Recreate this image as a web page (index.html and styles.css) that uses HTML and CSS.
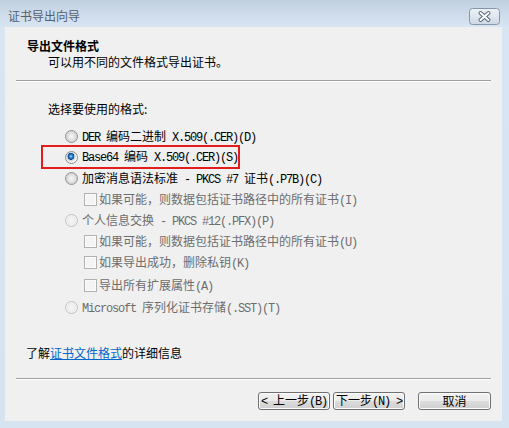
FILE: index.html
```html
<!DOCTYPE html>
<html lang="zh-CN">
<head>
  <meta charset="UTF-8" />
  <title>证书导出向导</title>
  <link rel="stylesheet" href="styles.css">
</head>
<body>
  <div class="window">
    <div class="titlebar">
      <span class="title">证书导出向导</span>
      <svg class="close" width="31" height="17" viewBox="0 0 31 17">
        <defs>
          <linearGradient id="closebg" x1="0" y1="0" x2="0" y2="1">
            <stop offset="0" stop-color="#eef2f7" />
            <stop offset="0.5" stop-color="#dfe6ef" />
            <stop offset="1" stop-color="#cdd7e3" />
          </linearGradient>
        </defs>
        <rect x="0.5" y="0.5" width="30" height="16" rx="3" fill="url(#closebg)" stroke="#8797ab" />
        <path d="M11.5 5 L19.5 12 M19.5 5 L11.5 12" stroke="#56667a" stroke-width="4" stroke-linecap="round" />
        <path d="M11.5 5 L19.5 12 M19.5 5 L11.5 12" stroke="#ffffff" stroke-width="2" stroke-linecap="round" />
      </svg>
    </div>

    <div class="client">
      <div class="header">
        <div class="head-title">导出文件格式</div>
        <div class="head-sub">可以用不同的文件格式导出证书。</div>
      </div>
      <div class="rule"></div>

      <div class="content">
        <div class="prompt">选择要使用的格式:</div>
        <div class="options">
          <div class="opt">
            <span class="radio"></span>
            <span><span class="en">DER </span>编码二进制<span class="en"> X.509(.CER)(D)</span></span>
          </div>
          <div class="opt marked">
            <span class="radio on"></span>
            <span><span class="en">Base64 </span>编码<span class="en"> X.509(.CER)(S)</span></span>
          </div>
          <div class="opt">
            <span class="radio"></span>
            <span>加密消息语法标准<span class="en"> - PKCS #7 </span>证书<span class="en">(.P7B)(C)</span></span>
          </div>
          <div class="opt sub dis">
            <span class="check"></span>
            <span>如果可能，则数据包括证书路径中的所有证书<span class="en">(I)</span></span>
          </div>
          <div class="opt dis">
            <span class="radio off"></span>
            <span>个人信息交换<span class="en"> - PKCS #12(.PFX)(P)</span></span>
          </div>
          <div class="opt sub dis">
            <span class="check"></span>
            <span>如果可能，则数据包括证书路径中的所有证书<span class="en">(U)</span></span>
          </div>
          <div class="opt sub dis">
            <span class="check"></span>
            <span>如果导出成功，删除私钥<span class="en">(K)</span></span>
          </div>
          <div class="opt sub dis gap2">
            <span class="check"></span>
            <span>导出所有扩展属性<span class="en">(A)</span></span>
          </div>
          <div class="opt dis gap1">
            <span class="radio off"></span>
            <span><span class="en">Microsoft </span>序列化证书存储<span class="en">(.SST)(T)</span></span>
          </div>
        </div>
        <div class="more">了解<a href="#">证书文件格式</a>的详细信息</div>
      </div>

      <div class="footer">
        <div class="rule"></div>
        <div class="buttons">
          <button type="button" class="btn"><span class="en">&lt; </span>上一步<span class="en">(B)</span></button>
          <button type="button" class="btn">下一步<span class="en">(N) &gt;</span></button>
          <button type="button" class="btn cancel">取消</button>
        </div>
      </div>
    </div>
  </div>
</body>
</html>
```

FILE: styles.css
```css
body { margin: 0; background: #d6e4f2; font-family: "Noto Sans CJK SC", sans-serif; font-size: 12px; line-height: 14px; color: #000; }
.window { width: 509px; height: 428px; display: flex; flex-direction: column; background: linear-gradient(#c1d0e0 0, #d8e5f3 27px, #d6e4f2 100%); }
.titlebar { height: 27px; display: flex; justify-content: space-between; align-items: flex-start; }
.title { margin: 9px 0 0 8px; color: #56606c; }
.close { display: block; margin: 8px 9px 0 0; }

.client { margin: 0 7px 7px 5px; height: 394px; background: #f0f0f0; display: flex; flex-direction: column; }
.header { padding: 12px 0 0 22px; }
.head-title { font-weight: bold; }
.head-sub { margin-top: 2px; padding-left: 21px; }
.rule { margin: 11px 11px 0; border-top: 1px solid #a0a0a0; border-bottom: 1px solid #ffffff; }

.content { flex: 1; padding: 20px 0 0 21px; }
.prompt { padding-left: 22px; }
.options { margin-top: 10px; padding-left: 39px; }
.opt { display: flex; align-items: center; gap: 4px; height: 21px; white-space: nowrap; }
.opt.sub { padding-left: 19px; gap: 2px; }
.opt.gap2 { margin-top: 2px; }
.opt.gap1 { margin-top: 1px; }
.opt.marked { box-sizing: border-box; width: 199px; height: 24px; margin: -2px 0 -1px -24px; padding-left: 22px; border: 2px solid #e31c1c; }
.dis { color: #6d6d6d; }
.en { font-family: "Liberation Mono", monospace; letter-spacing: -1.2px; }

.radio { flex: none; box-sizing: border-box; width: 13px; height: 13px; border-radius: 50%; border: 1px solid #8e8f8f; background: radial-gradient(circle at 50% 50%, #f7f7f7 0, #dcdcdc 4.5px, #c9c9c9 5px, #f8f8f8 5.5px); }
.radio.on { background: radial-gradient(circle at 45% 40%, #a8dcff 0, #2b82d4 1.6px, #0c4a8c 3.2px, #c5d0da 3.6px, #e2e2e2 4.6px, #f8f8f8 5.5px); }
.radio.off { border-color: #c0c0c0; background: radial-gradient(circle, #f6f6f6 0, #ececec 4.5px, #f8f8f8 5.5px); }
.check { flex: none; box-sizing: border-box; width: 13px; height: 13px; border: 1px solid #b1b1b1; background: #f4f4f4; box-shadow: inset 0 0 0 1px #fbfbfb; }

.more { margin-top: 28px; }
.more a { color: #0066cc; text-decoration: underline; }

.footer { padding-bottom: 11px; }
.footer .rule { margin-top: 0; }
.buttons { display: flex; justify-content: flex-end; gap: 3px; margin-top: 12px; padding-right: 11px; }
.btn { box-sizing: border-box; width: 72px; height: 18px; padding: 0; border: 1px solid #707070; border-radius: 3px; background: linear-gradient(#f2f2f2, #ebebeb 50%, #dddddd 50%, #cfcfcf); box-shadow: inset 0 0 0 1px #fcfcfc; font: inherit; line-height: 14px; color: #000; text-align: center; white-space: nowrap; cursor: pointer; }
.btn.cancel { width: 73px; margin-left: 10px; }
```
